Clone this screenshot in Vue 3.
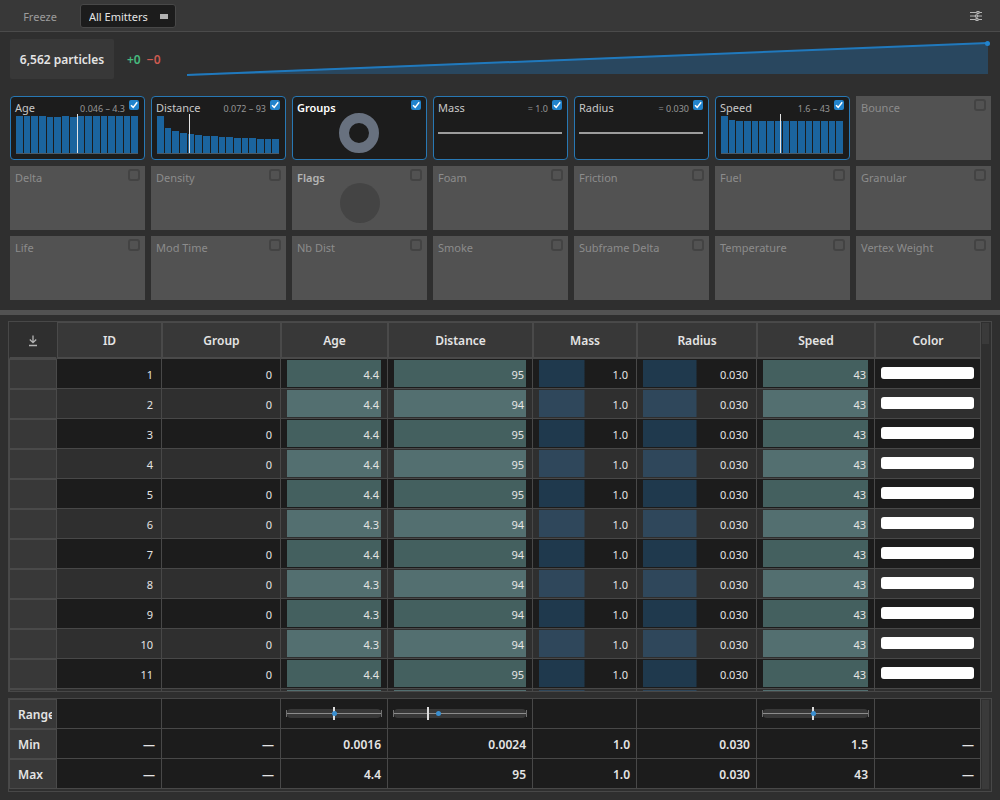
<script setup>
const hist = {
  age: [37, 37, 37, 37, 36, 36, 37, 36, 37, 37, 37, 37, 37, 37, 37, 37],
  distance: [37, 25, 22, 20, 19, 18, 17, 17, 16, 16, 15, 15, 15, 14, 14, 14],
  speed: [37, 33, 32, 32, 32, 32, 32, 32, 32, 32, 32, 32, 32, 32, 32, 32]
}

const off = (name) => ({ name, on: false })

const channels = [
  { name: 'Age', on: true, value: '0.046 – 4.3', bars: hist.age, mean: 50 },
  { name: 'Distance', on: true, value: '0.072 – 93', bars: hist.distance, mean: 26 },
  { name: 'Groups', on: true, strong: true, pie: true },
  { name: 'Mass', on: true, value: '= 1.0', constant: true },
  { name: 'Radius', on: true, value: '= 0.030', constant: true },
  { name: 'Speed', on: true, value: '1.6 – 43', bars: hist.speed, mean: 48 },
  off('Bounce'),
  off('Delta'),
  off('Density'),
  { name: 'Flags', on: false, strong: true, pie: true },
  off('Foam'),
  off('Friction'),
  off('Fuel'),
  off('Granular'),
  off('Life'),
  off('Mod Time'),
  off('Nb Dist'),
  off('Smoke'),
  off('Subframe Delta'),
  off('Temperature'),
  off('Vertex Weight')
]

const columns = ['ID', 'Group', 'Age', 'Distance', 'Mass', 'Radius', 'Speed', 'Color']

const ages = ['4.4', '4.4', '4.4', '4.4', '4.4', '4.3', '4.4', '4.3', '4.3', '4.3', '4.4', '4.4']
const distances = [95, 94, 95, 95, 95, 94, 94, 94, 94, 94, 95, 95]
const rows = ages.map((age, i) => ({ id: i + 1, age, distance: distances[i] }))

const ranges = [
  null,
  null,
  { mean: 50, median: 50 },
  { mean: 26, median: 33 },
  null,
  null,
  { mean: 48, median: 48 },
  null
]
const minimum = ['—', '—', '0.0016', '0.0024', '1.0', '0.030', '1.5', '—']
const maximum = ['—', '—', '4.4', '95', '1.0', '0.030', '43', '—']
</script>

<template>
  <main class="app">
    <header class="toolbar">
      <button type="button" class="freeze">Freeze</button>
      <div class="picker">
        <select aria-label="Emitter">
          <option>All Emitters</option>
        </select>
        <span class="picker-mark"></span>
      </div>
      <button type="button" class="settings" aria-label="Settings">
        <svg width="12" height="10" viewBox="0 0 12 10" fill="none" stroke="#b4b4b4" stroke-width="1.200">
          <path d="M0 1.500h6.500M9.500 1.500H12M0 5h5M8 5H12M0 8.500h5.500M8.500 8.500H12" />
          <circle cx="8" cy="1.500" r="1.200" />
          <circle cx="6.500" cy="5" r="1.200" />
          <circle cx="7" cy="8.500" r="1.200" />
        </svg>
      </button>
    </header>

    <section class="summary">
      <div class="count">6,562 particles</div>
      <div class="delta"><span class="plus">+0</span><span class="minus">−0</span></div>
      <div class="trend">
        <svg viewBox="0 0 800 40" preserveAspectRatio="none">
          <polygon points="0,35 800,4 800,35" fill="#29475f" />
          <line x1="0" y1="36" x2="800" y2="4" stroke="#2079bd" stroke-width="2" vector-effect="non-scaling-stroke" />
        </svg>
        <i class="trend-dot"></i>
      </div>
    </section>

    <section class="cards">
      <div v-for="c in channels" :key="c.name" class="card" :class="{ on: c.on, strong: c.strong }">
        <label class="card-head">
          <span class="name">{{ c.name }}</span>
          <span v-if="c.value" class="value">{{ c.value }}</span>
          <input type="checkbox" :checked="c.on" />
          <svg v-if="c.on" class="tick" width="10" height="10" viewBox="0 0 10 10">
            <path d="M2 5.200l2.200 2.200L8.200 2.300" fill="none" stroke="#fff" stroke-width="1.500" />
          </svg>
        </label>
        <div v-if="c.bars" class="hist">
          <i v-for="(h, i) in c.bars" :key="i" class="bar" :style="{ height: h + 'px' }"></i>
          <i class="mean" :style="{ left: c.mean + '%' }"></i>
        </div>
        <div v-if="c.constant" class="constant"></div>
        <div v-if="c.pie" class="pie"></div>
      </div>
    </section>

    <div class="splitter"></div>

    <section class="tables">
      <div class="pane data">
        <table>
          <colgroup>
            <col class="w-head" /><col class="w-id" /><col class="w-group" /><col class="w-age" />
            <col class="w-distance" /><col class="w-mass" /><col class="w-radius" /><col class="w-speed" /><col class="w-color" />
          </colgroup>
          <thead>
            <tr>
              <th class="corner">
                <button type="button" aria-label="Export">
                  <svg width="10" height="12" viewBox="0 0 10 12" fill="none" stroke="#b4b4b4" stroke-width="1.300">
                    <path d="M5 0.500v7M1.800 4.500L5 7.700l3.200-3.200" />
                    <path d="M1 10.500h8" stroke-width="1.500" />
                  </svg>
                </button>
              </th>
              <th v-for="c in columns" :key="c" scope="col">{{ c }}</th>
            </tr>
          </thead>
          <tbody>
            <tr v-for="r in rows" :key="r.id">
              <th></th>
              <td>{{ r.id }}</td>
              <td>0</td>
              <td><div class="cell full">{{ r.age }}</div></td>
              <td><div class="cell full">{{ r.distance }}</div></td>
              <td><div class="cell half">1.0</div></td>
              <td><div class="cell half">0.030</div></td>
              <td><div class="cell full">43</div></td>
              <td><div class="swatch"></div></td>
            </tr>
          </tbody>
        </table>
        <div class="scroll"><i class="thumb"></i></div>
      </div>

      <div class="pane totals">
        <table>
          <colgroup>
            <col class="w-head" /><col class="w-id" /><col class="w-group" /><col class="w-age" />
            <col class="w-distance" /><col class="w-mass" /><col class="w-radius" /><col class="w-speed" /><col class="w-color" />
          </colgroup>
          <tbody>
            <tr>
              <th scope="row"><div class="clip">Range</div></th>
              <td v-for="(r, i) in ranges" :key="i">
                <div v-if="r" class="range">
                  <i class="range-mean" :style="{ left: r.mean + '%' }"></i>
                  <i class="range-dot" :style="{ left: r.median + '%' }"></i>
                </div>
              </td>
            </tr>
            <tr>
              <th scope="row"><div class="clip">Min</div></th>
              <td v-for="(v, i) in minimum" :key="i">{{ v }}</td>
            </tr>
            <tr>
              <th scope="row"><div class="clip">Max</div></th>
              <td v-for="(v, i) in maximum" :key="i">{{ v }}</td>
            </tr>
          </tbody>
        </table>
        <div class="scroll"><i class="thumb"></i></div>
      </div>
    </section>
  </main>
</template>

<style>
body {
  background: #2f2f2f;
}
</style>

<style scoped>
* {
  box-sizing: border-box;
}
.app {
  display: flex;
  flex-direction: column;
  height: 100vh;
  background: #2f2f2f;
  color: #e4e4e4;
  font-family: "Noto Sans", "Open Sans", sans-serif;
  font-size: 12px;
  line-height: 16px;
}
button,
select {
  font: inherit;
  color: inherit;
  background: none;
  border: 0;
  margin: 0;
  padding: 0;
}

.toolbar {
  display: flex;
  align-items: center;
  height: 32px;
  padding: 0 18px 0 12px;
  background: #383838;
  border-bottom: 1px solid #4b4b4b;
}
.freeze {
  width: 56px;
  height: 24px;
  padding-top: 2px;
  color: #9c9c9c;
  font-size: 11px;
}
.picker {
  position: relative;
  margin-left: 12px;
}
.picker select {
  appearance: none;
  display: block;
  width: 96px;
  height: 24px;
  padding: 2px 8px 0;
  background: #1c1c1c;
  border: 1px solid #484848;
  border-radius: 3px;
  font-size: 11px;
}
.picker-mark {
  position: absolute;
  right: 8px;
  top: 10px;
  width: 8px;
  height: 5px;
  background: #b0b0b0;
  pointer-events: none;
}
.settings {
  display: flex;
  margin-left: auto;
}

.summary {
  display: flex;
  align-items: center;
  padding: 7px 12px 0 10px;
}
.count {
  display: grid;
  place-items: center;
  width: 104px;
  height: 40px;
  padding-top: 2px;
  background: #383838;
  border-radius: 2px;
  font-weight: 600;
}
.delta {
  display: flex;
  gap: 6px;
  width: 60px;
  padding-top: 2px;
  margin-left: 13px;
  font-weight: 600;
}
.plus {
  color: #47b97e;
}
.minus {
  color: #cc5a50;
}
.trend {
  position: relative;
  flex: 1;
  height: 40px;
}
.trend svg {
  display: block;
  width: 100%;
  height: 100%;
}
.trend-dot {
  position: absolute;
  right: -2px;
  top: 2px;
  width: 5px;
  height: 5px;
  border-radius: 50%;
  background: #2283cc;
}

.cards {
  display: grid;
  grid-template-columns: repeat(7, 1fr);
  grid-auto-rows: 64px;
  gap: 6px;
  padding: 17px 9px 10px 10px;
}
.card {
  position: relative;
  padding: 0 5px;
  background: #525252;
  color: #8c8c8c;
}
.card.on {
  padding: 0 5px 0 4px;
  background: #1c1c1c;
  border: 1px solid #2878b4;
  border-radius: 4px;
  color: #c8c8c8;
}
.card.strong {
  color: #b4b4b4;
}
.card.on.strong {
  color: #fff;
}
.card-head {
  display: flex;
  align-items: center;
  height: 24px;
  font-size: 11px;
}
.card.on .card-head {
  height: 22px;
}
.strong .name {
  font-weight: 600;
}
.value {
  margin-left: auto;
  margin-right: 14px;
  padding-top: 1px;
  color: #969696;
  font-size: 9px;
}
.card input {
  position: absolute;
  top: 3px;
  right: 5px;
  appearance: none;
  width: 12px;
  height: 12px;
  margin: 0;
  border: 2px solid #434343;
  border-radius: 3px;
}
.card.on input {
  width: 10px;
  height: 10px;
  border: 0;
  border-radius: 2px;
  background: #2283cc;
}
.tick {
  position: absolute;
  top: 3px;
  right: 5px;
  pointer-events: none;
}
.hist {
  position: relative;
  display: flex;
  align-items: flex-end;
  gap: 1px;
  height: 38px;
  margin: -3px 1px 0;
  border-bottom: 1px solid #4c5a66;
}
.bar {
  flex: 1;
  background: #1b649e;
}
.mean {
  position: absolute;
  top: -2px;
  bottom: 0;
  width: 1px;
  background: #e4e4e4;
}
.constant {
  height: 2px;
  margin-top: 13px;
  background: #9c9c9c;
}
.pie {
  width: 40px;
  height: 40px;
  margin: -7px auto 0;
  border-radius: 50%;
  background: #444;
}
.on .pie {
  margin-top: -6px;
  background: none;
  border: 10px solid #68717f;
}

.splitter {
  height: 5px;
  flex: none;
  background: #525252;
}

.tables {
  display: flex;
  flex-direction: column;
  gap: 6px;
  flex: 1;
  min-height: 0;
  padding: 6px 8px 8px;
}
.pane {
  display: flex;
  align-items: flex-start;
  overflow: hidden;
  border: 1px solid #484848;
  background: #2f2f2f;
}
.data {
  flex: 1;
  min-height: 0;
}
.totals {
  flex: none;
  padding-bottom: 2px;
}
table {
  flex: 1;
  width: 100%;
  min-width: 0;
  table-layout: fixed;
  border-collapse: separate;
  border-spacing: 0;
}
.w-head { width: 48px; }
.w-id { width: 105px; }
.w-group { width: 119px; }
.w-age { width: 107px; }
.w-distance { width: 145px; }
.w-mass { width: 104px; }
.w-radius { width: 120px; }
.w-speed { width: 118px; }
.w-color { width: 106px; }

th {
  padding: 2px 0 0;
  background: #383838;
  border: 1px solid #4a4a4a;
  font-weight: 600;
}
thead th {
  height: 37px;
  border-bottom-width: 2px;
}
.corner {
  background: #2f2f2f;
  border-color: #2f2f2f;
  border-bottom-color: #4a4a4a;
}
.corner button {
  display: grid;
  place-items: center;
  width: 100%;
}
td {
  height: 30px;
  padding: 2px 8px 0;
  background: #1c1c1c;
  border-right: 1px solid #484848;
  border-bottom: 1px solid #484848;
  text-align: right;
}
.data td {
  font-size: 11px;
}
.data tbody tr:nth-child(even) td {
  background: #2f2f2f;
}
.data td:has(.cell) {
  padding: 0 6px;
}
.data td:has(.swatch) {
  padding: 0 6px 2px;
}
.cell {
  height: 27px;
  padding-right: 2px;
  line-height: 29px;
}
.full {
  background: #44605f;
}
.half {
  background: linear-gradient(#1f394d, #1f394d) no-repeat left / 50% 100%;
}
tr:nth-child(even) .full {
  background: #536f70;
}
tr:nth-child(even) .half {
  background-image: linear-gradient(#2f475b, #2f475b);
}
.swatch {
  height: 12px;
  background: #fff;
  border-radius: 3px;
}
.totals td {
  padding: 2px 6px 0;
  font-weight: 600;
}
.totals td:has(.range) {
  padding: 0 6px;
}
.clip {
  margin: 0 4px 0 8px;
  overflow: hidden;
  text-align: left;
}
.range {
  position: relative;
  height: 9px;
  border-radius: 4px;
  background: linear-gradient(#8c8c8c, #8c8c8c) no-repeat center / 100% 1px, #383838;
}
.range::before,
.range::after {
  content: "";
  position: absolute;
  top: 1px;
  width: 1px;
  height: 7px;
  background: #707070;
}
.range::before {
  left: -1px;
}
.range::after {
  right: -1px;
}
.range-mean {
  position: absolute;
  top: -2px;
  width: 2px;
  height: 13px;
  margin-left: -1px;
  background: #dcdcdc;
}
.range-dot {
  position: absolute;
  top: 2px;
  width: 5px;
  height: 5px;
  margin-left: -2px;
  border-radius: 50%;
  background: #3a8fd0;
}
.scroll {
  flex: none;
  align-self: stretch;
  width: 10px;
  padding: 1px 2px 0 1px;
}
.thumb {
  display: block;
  height: 21px;
  background: #3a3a3a;
}
.totals .thumb {
  height: 100%;
}
</style>
